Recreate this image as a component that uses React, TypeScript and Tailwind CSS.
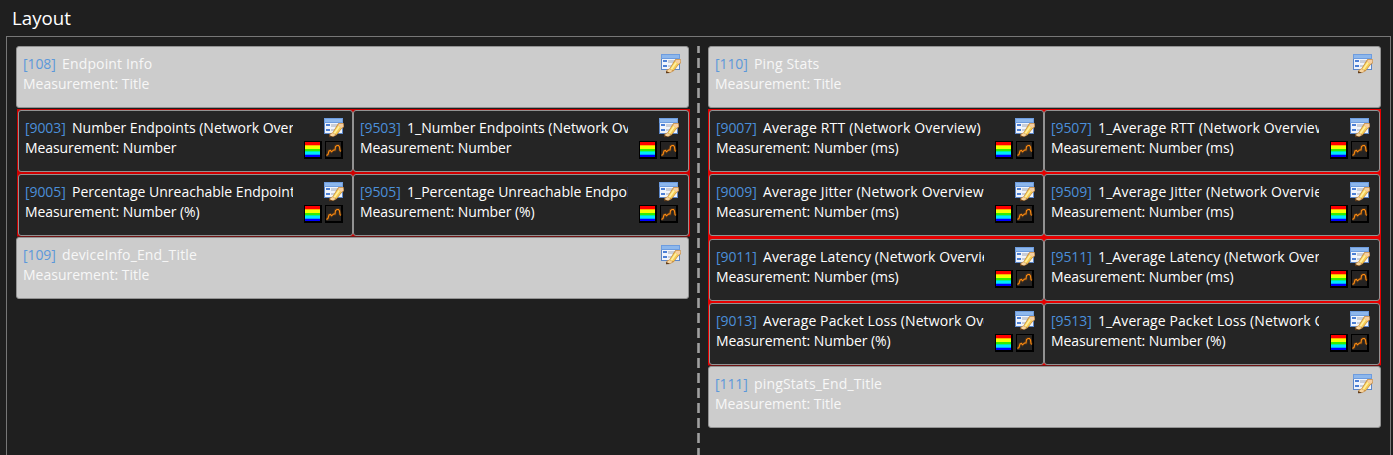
type Item = { id: number; name: string; unit: string; spacing?: string };

function EditIcon() {
  return (
    <svg width="20" height="20" viewBox="0 0 20 20" className="block shrink-0" shapeRendering="crispEdges">
      <rect x="0" y="0" width="19" height="16" fill="#5b86c8" />
      <rect x="0" y="0" width="19" height="5" fill="#6d9cdf" />
      <rect x="1" y="1" width="17" height="3" fill="#8db7ec" />
      <rect x="1" y="5" width="17" height="10" fill="#f0f4fb" />
      <rect x="2" y="6" width="4" height="2" fill="#4c7fd4" />
      <rect x="2" y="11" width="4" height="2" fill="#4c7fd4" />
      <rect x="7" y="6" width="7" height="3" fill="#c9ced8" />
      <rect x="7" y="11" width="4" height="2" fill="#c9ced8" />
      <g shapeRendering="auto">
        <path d="M5 19 L5.6 15.8 L8.5 14.5 L13 7 L14.5 5 L19.6 5 L20 9 L17.5 11 L12.8 17 L9.5 18.7 Z" fill="#c48c45" />
        <path d="M8.8 15 L14 7 L17.8 9.5 L12.6 16.3 Z" fill="#f6cd55" />
        <path d="M9.6 15 L14.4 8 L15.9 9 L11 15.8 Z" fill="#fff0a0" />
        <path d="M14.8 5.8 L19.2 5.8 L19.4 8.6 L17.5 10 L14.2 7.6 Z" fill="#f6cfa2" />
        <path d="M6 18 L6.6 16.2 L8.8 15 L11.6 17 L9 18.2 Z" fill="#f6d5a0" />
        <path d="M5 19.2 L5.2 17 L9 19 Z" fill="#5c3818" />
      </g>
    </svg>
  );
}

function SpectrumIcon() {
  return (
    <svg width="18" height="18" viewBox="0 0 18 18" className="block" shapeRendering="crispEdges">
      <rect width="18" height="18" fill="#000" />
      <rect x="1" y="1" width="15" height="3" fill="#ff0000" />
      <rect x="1" y="4" width="15" height="1" fill="#ffb000" />
      <rect x="1" y="5" width="15" height="3" fill="#f4ff00" />
      <rect x="1" y="8" width="15" height="2" fill="#35ee00" />
      <rect x="1" y="10" width="15" height="1" fill="#00f1a0" />
      <rect x="1" y="11" width="15" height="2" fill="#00e5ff" />
      <rect x="1" y="13" width="15" height="1" fill="#00a8ff" />
      <rect x="1" y="14" width="15" height="2" fill="#0000ff" />
    </svg>
  );
}

function ChartIcon() {
  return (
    <svg width="18" height="18" viewBox="0 0 18 18" className="block">
      <rect width="18" height="18" fill="#000" />
      <rect x="1" y="1" width="15" height="15" fill="#252322" />
      <path d="M1.5 14.5 L3 13.5 L4 10 L5.5 9.5 L6.5 10.8 L8.5 9 L10 9 L10.5 5.5 L12 4.5 L13.5 4.5 L14.5 6 L15 9.5 L15.8 10.5" fill="none" stroke="#8a4a0c" strokeWidth="3" opacity="0.35" />
      <path d="M1.5 14.5 L3 13.5 L4 10 L5.5 9.5 L6.5 10.8 L8.5 9 L10 9 L10.5 5.5 L12 4.5 L13.5 4.5 L14.5 6 L15 9.5 L15.8 10.5" fill="none" stroke="#ff8c10" strokeWidth="1.1" />
    </svg>
  );
}

function TitleCard({ id, name }: { id: number; name: string }) {
  return (
    <div className="flex h-[62px] w-[673px] justify-between rounded-[3px] border border-[#929292] bg-[#cccccc] pt-[7px] pr-[7px] pl-[6px]">
      <div className="leading-[20px] whitespace-nowrap text-[#f7f7f7]">
        <div className="flex">
          <span className="w-[39px] text-[#5c98da]">[{id}]</span>
          <span className="tracking-[0.15px]">{name}</span>
        </div>
        <div className="tracking-[0px]">Measurement: Title</div>
      </div>
      <EditIcon />
    </div>
  );
}

function MetricCard({ id, name, unit, spacing = "tracking-[0.18px]" }: Item) {
  return (
    <div className="flex h-[62px] w-[335px] justify-between rounded-[3px] border border-[#929292] bg-[#252525] pt-[7px] pr-[8px] pl-[6px] last:w-[336px] last:pr-[9px]">
      <div className="w-[268px] overflow-hidden leading-[20px] whitespace-nowrap text-white">
        <div className="flex">
          <span className="w-[47px] shrink-0 text-[#4b8fd9]">[{id}]</span>
          <span className={spacing}>{name}</span>
        </div>
        <div>Measurement: {unit}</div>
      </div>
      <div className="flex shrink-0 flex-col items-end">
        <EditIcon />
        <div className="mt-[3px] mr-px flex gap-[3px]">
          <SpectrumIcon />
          <ChartIcon />
        </div>
      </div>
    </div>
  );
}

const tight = "tracking-[0px]";
const snug = "tracking-[0.1px]";

const left: Item[][] = [
  [
    { id: 9003, name: "Number Endpoints (Network Overview)", unit: "Number", spacing: tight },
    { id: 9503, name: "1_Number Endpoints (Network Overview)", unit: "Number", spacing: tight },
  ],
  [
    { id: 9005, name: "Percentage Unreachable Endpoints", unit: "Number (%)", spacing: tight },
    { id: 9505, name: "1_Percentage Unreachable Endpoints", unit: "Number (%)", spacing: tight },
  ],
];

const right: Item[][] = [
  [
    { id: 9007, name: "Average RTT (Network Overview)", unit: "Number (ms)" },
    { id: 9507, name: "1_Average RTT (Network Overview)", unit: "Number (ms)" },
  ],
  [
    { id: 9009, name: "Average Jitter (Network Overview)", unit: "Number (ms)" },
    { id: 9509, name: "1_Average Jitter (Network Overview)", unit: "Number (ms)" },
  ],
  [
    { id: 9011, name: "Average Latency (Network Overview)", unit: "Number (ms)", spacing: snug },
    { id: 9511, name: "1_Average Latency (Network Overview)", unit: "Number (ms)", spacing: snug },
  ],
  [
    { id: 9013, name: "Average Packet Loss (Network Overview)", unit: "Number (%)", spacing: snug },
    { id: 9513, name: "1_Average Packet Loss (Network Overview)", unit: "Number (%)", spacing: snug },
  ],
];

function Rows({ rows, shade }: { rows: Item[][]; shade: string }) {
  return (
    <div className={"mt-px w-[673px] border-b border-[#701414] " + shade}>
      {rows.map((row, i) => (
        <div
          key={row[0].id}
          className={"flex px-px pt-px last:pb-0 " + (i === 1 && rows.length > 2 ? "pb-[2px]" : "pb-px")}
        >
          {row.map((item) => (
            <MetricCard key={item.id} {...item} />
          ))}
        </div>
      ))}
    </div>
  );
}

export default function App() {
  return (
    <div className="h-[455px] w-[1393px] overflow-hidden bg-[#1f1f1f] pl-[6px] font-['Open_Sans',sans-serif] text-[14px] tracking-[-0.08px]">
      <h1 className="h-[36px] pt-[5px] pl-[6px] text-[18.7px] leading-[26px] tracking-normal text-white">Layout</h1>
      <div className="flex h-[440px] w-[1385px] border border-[#777777] pt-[9px] pl-[9px]">
        <div className="w-[673px]">
          <TitleCard id={108} name="Endpoint Info" />
          <div className="pl-px">
            <Rows rows={left} shade="bg-[#d00000]" />
          </div>
          <TitleCard id={109} name="deviceInfo_End_Title" />
        </div>
        <svg width="3" height="420" className="mr-[8px] ml-[8px] block" aria-hidden="true">
          <path d="M1.5 0V420" stroke="#a0a0a0" strokeWidth="2.6" strokeDasharray="10 5" strokeDashoffset="3" />
        </svg>
        <div className="w-[673px]">
          <TitleCard id={110} name="Ping Stats" />
          <Rows rows={right} shade="bg-[#e60000]" />
          <TitleCard id={111} name="pingStats_End_Title" />
        </div>
      </div>
    </div>
  );
}
